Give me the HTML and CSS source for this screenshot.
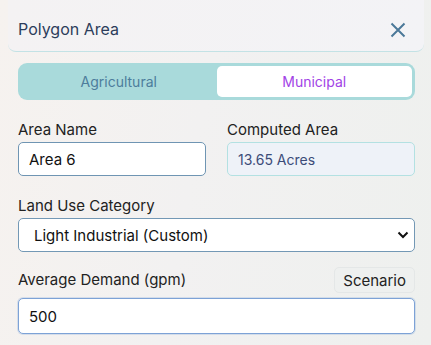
FILE: index.html
```html
<!DOCTYPE html>
<html lang="en">
<head>
    <meta charset="UTF-8">
    <meta name="viewport" content="width=device-width, initial-scale=1.0">
    <title>Polygon Area</title>
    <link rel="stylesheet" href="styles.css">
</head>
<body>
    <div class="panel">
        <div class="panel-header">
            <span class="panel-title">Polygon Area</span>
            <button class="close-btn" type="button" aria-label="Close">
                <svg width="16" height="16" viewBox="0 0 16 16">
                    <path d="M1.5 1.5 L14.5 14.5 M14.5 1.5 L1.5 14.5" stroke="#4b7899" stroke-width="2" stroke-linecap="butt" fill="none"/>
                </svg>
            </button>
        </div>
        <div class="panel-body">
            <div class="toggle">
                <button class="toggle-btn" type="button">Agricultural</button>
                <button class="toggle-btn active" type="button">Municipal</button>
            </div>

            <div class="field-row">
                <div class="field">
                    <label class="field-label" for="area-name">Area Name</label>
                    <input id="area-name" class="text-input" type="text" value="Area 6">
                </div>
                <div class="field">
                    <span class="field-label">Computed Area</span>
                    <div class="readonly-box">13.65 Acres</div>
                </div>
            </div>

            <div class="field">
                <label class="field-label" for="land-use">Land Use Category</label>
                <div class="select-wrap">
                    <select id="land-use" class="select-input">
                        <option>Light Industrial (Custom)</option>
                        <option>Residential</option>
                        <option>Commercial</option>
                    </select>
                    <svg class="chevron" width="12" height="8" viewBox="0 0 12 8">
                        <path d="M1.5 1.5 L6 6 L10.5 1.5" stroke="#111" stroke-width="2" fill="none"/>
                    </svg>
                </div>
            </div>

            <div class="field demand-field">
                <div class="label-row">
                    <label class="field-label" for="demand">Average Demand (gpm)</label>
                    <button class="scenario-btn" type="button">Scenario</button>
                </div>
                <input id="demand" class="text-input focused" type="text" value="500">
            </div>
        </div>
    </div>
</body>
</html>
```

FILE: styles.css
```css
body {
    margin: 0;
    font-family: 'Inter', 'Noto Sans', sans-serif;
    color: #222;
    background: linear-gradient(100deg, #f6f2ef 0%, #f2f1f1 45%, #eef0ee 100%);
    min-height: 345px;
}
.panel {
    padding: 0 7px 0 8px;
}
.panel-header {
    height: 52px;
    box-sizing: border-box;
    display: flex;
    align-items: center;
    justify-content: space-between;
    padding: 6px 18px 0 10px;
    border-bottom: 1px solid #c3e2e5;
    border-radius: 0 0 8px 8px;
    background: linear-gradient(100deg, #f4f2f3 0%, #f3f3f6 100%);
}
.panel-title {
    font-size: 16px;
    color: #2c3d5b;
}
.close-btn {
    background: none;
    border: none;
    padding: 0;
    width: 16px;
    height: 16px;
    cursor: pointer;
    display: flex;
    margin-top: 2px;
}
.panel-body {
    padding: 11px 9px 0 10px;
}
.toggle {
    display: grid;
    grid-template-columns: minmax(0, 1fr) minmax(0, 1fr);
    background-color: #a9dadb;
    border-radius: 9px;
    padding: 3px;
    height: 37px;
    box-sizing: border-box;
}
.toggle-btn {
    border: none;
    background: none;
    font-family: inherit;
    font-size: 14px;
    color: #4d7d9c;
    border-radius: 5px;
    cursor: pointer;
}
.toggle-btn.active {
    background-color: #fff;
    color: #a243e6;
}
.field-row {
    display: grid;
    grid-template-columns: minmax(0, 1fr) minmax(0, 1fr);
    gap: 21px;
}
.field {
    display: flex;
    flex-direction: column;
    margin-top: 21px;
}
.field-label {
    font-size: 15px;
    line-height: 18px;
    color: #222;
    margin-bottom: 3px;
}
.text-input {
    width: 100%;
    height: 34px;
    box-sizing: border-box;
    border: 1px solid #6f95b3;
    border-radius: 5px;
    padding: 0 10px;
    font-family: inherit;
    font-size: 15px;
    color: #111;
    background: #fff;
    outline: none;
}
.text-input.focused {
    height: 36px;
    border: 1.5px solid #7da2d6;
    box-shadow: 0 0 0 1px rgba(125, 162, 214, 0.25);
}
.readonly-box {
    height: 34px;
    box-sizing: border-box;
    border: 1px solid #b3e1e2;
    border-radius: 5px;
    background: #eef2f8;
    padding: 0 10px;
    display: flex;
    align-items: center;
    font-size: 14px;
    color: #3c4c78;
}
.select-wrap {
    position: relative;
}
.select-input {
    width: 100%;
    height: 34px;
    box-sizing: border-box;
    border: 1px solid #7398b5;
    border-radius: 5px;
    background: #fff;
    padding: 0 15px;
    font-family: inherit;
    font-size: 15px;
    color: #111;
    appearance: none;
    outline: none;
}
.chevron {
    position: absolute;
    right: 6px;
    top: 13px;
    pointer-events: none;
}
.demand-field {
    margin-top: 15px;
}
.label-row {
    display: flex;
    justify-content: space-between;
    align-items: center;
    margin-bottom: 5px;
}
.label-row .field-label {
    margin-bottom: 0;
}
.scenario-btn {
    height: 26px;
    padding: 0 8px;
    border: 1px solid #e4e7e7;
    border-radius: 5px;
    background: #eef0ef;
    font-family: inherit;
    font-size: 15px;
    color: #222;
    cursor: pointer;
}
```
